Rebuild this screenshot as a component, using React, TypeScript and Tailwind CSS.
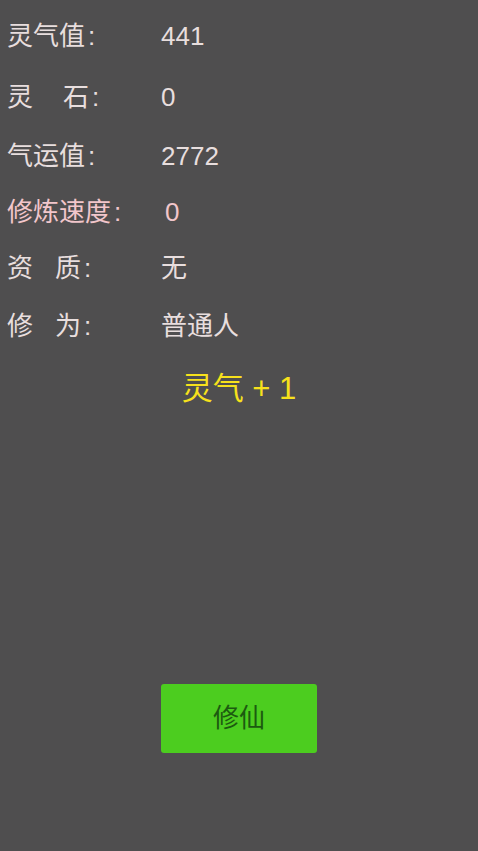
import React from 'react';

const font = { fontFamily: '"Liberation Sans", "Noto Sans CJK SC", sans-serif' };

type Row = {
  label: React.ReactNode;
  value: string;
  height: string;
  pink?: boolean;
};

const Colon = () => <span className="ml-[3px]">:</span>;

const rows: Row[] = [
  { label: <>灵气值<Colon /></>, value: '441', height: 'h-[60px]' },
  {
    label: (
      <>
        灵<span className="ml-[30px]">石</span>
        <Colon />
      </>
    ),
    value: '0',
    height: 'h-[62px]',
  },
  { label: <>气运值<Colon /></>, value: '2772', height: 'h-[56px]' },
  { label: <>修炼速度<Colon /></>, value: '0', height: 'h-[56px]', pink: true },
  {
    label: (
      <>
        资<span className="ml-[22px]">质</span>
        <Colon />
      </>
    ),
    value: '无',
    height: 'h-[56px]',
  },
  {
    label: (
      <>
        修<span className="ml-[22px]">为</span>
        <Colon />
      </>
    ),
    value: '普通人',
    height: 'h-[60px]',
  },
];

const App: React.FC = () => {
  return (
    <div className="min-h-[851px] w-full bg-[#4f4e4f] pt-[6px]" style={font}>
      {rows.map((row, i) => (
        <div
          key={i}
          className={`flex items-center ${row.height} text-[26px] ${
            row.pink ? 'text-[#f2c6cb]' : 'text-[#e8dede]'
          }`}
        >
          <div className="w-[161px] shrink-0 pl-[7px] whitespace-nowrap">{row.label}</div>
          <div className={row.pink ? 'pl-[4px]' : ''}>{row.value}</div>
        </div>
      ))}

      <div className="flex h-[66px] items-center justify-center text-[31px] text-[#f7e11c]">
        灵气 + 1
      </div>

      <div className="mt-[262px] flex justify-center">
        <button className="flex h-[69px] w-[156px] items-center justify-center rounded-[3px] bg-[#4ccd1f] text-[26px] text-[#1c5a10]">
          修仙
        </button>
      </div>
    </div>
  );
};

export default App;
